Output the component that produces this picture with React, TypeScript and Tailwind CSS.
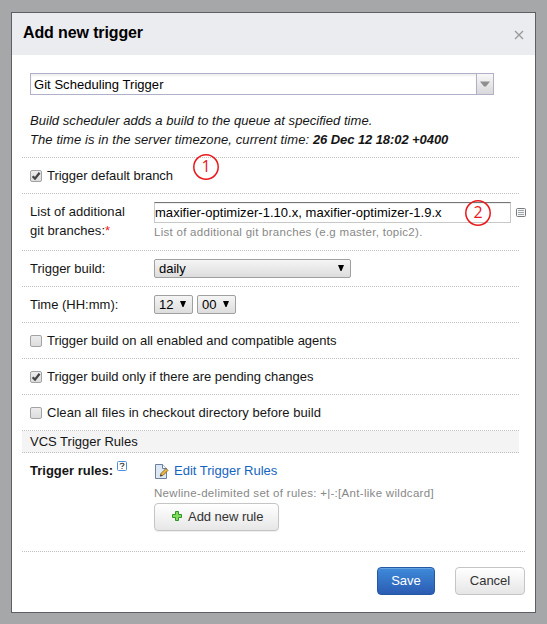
import type { ReactNode } from "react";

function Check({ checked = false }: { checked?: boolean }) {
  return (
    <span className="mr-[5px] mt-px flex h-3 w-3 shrink-0 items-center justify-center rounded-[2px] border border-[#a3a3a3] bg-linear-to-b from-[#ededed] to-[#dcdcdc]">
      {checked && (
        <svg width="10" height="10" viewBox="0 0 10 10" className="shrink-0">
          <path d="M1.6 5.2 L4 7.6 L8.6 1.8" fill="none" stroke="#444" strokeWidth="2.3" />
        </svg>
      )}
    </span>
  );
}

function Row({ children, className = "h-9" }: { children: ReactNode; className?: string }) {
  return <div className={`flex w-[497px] border-b border-dotted border-[#c0c0c0] pl-2 ${className}`}>{children}</div>;
}

function CheckRow({ label, checked, tracking }: { label: string; checked?: boolean; tracking: string }) {
  return (
    <Row className="h-9 items-center">
      <Check checked={checked} />
      <span className={tracking}>{label}</span>
    </Row>
  );
}

function Select({ value, className }: { value: string; className: string }) {
  return (
    <div className={`flex h-[19px] items-center justify-between rounded-[2px] border border-[#a0a0a0] bg-linear-to-b from-[#f5f5f5] to-[#dddddd] pl-1 text-black ${className}`}>
      <span>{value}</span>
      <svg width="6" height="6" viewBox="0 0 6 6" className="mb-[2px] mr-[6px]">
        <path d="M0 0H6L3.5 6H2.5Z" fill="#000" />
      </svg>
    </div>
  );
}

function Marker({ value, className }: { value: string; className: string }) {
  return (
    <div className={`absolute h-[26px] w-[26px] ${className}`}>
      <svg width="26" height="26" viewBox="0 0 26 26" className="absolute inset-0">
        <circle cx="13" cy="13" r="12.2" fill="none" stroke="#e8191c" strokeWidth="1.5" />
      </svg>
      <span className="block text-center font-['Open_Sans',sans-serif] text-[16px] leading-[25px] text-[#e8191c]">{value}</span>
    </div>
  );
}

export default function App() {
  return (
    <div className="relative h-[624px] w-[547px] overflow-hidden bg-[#a6a7a9] pl-[11px] pt-3 font-['Liberation_Sans',Arial,sans-serif] text-[13px] leading-[19px] text-[#151515]">
      <div className="h-[601px] w-[525px] border border-[#5e5f64] bg-white">
        <header className="flex h-[42px] justify-between bg-[#ebecf0] pl-[11px] pr-[11px]">
          <h1 className="pt-[10px] text-[16px] font-bold leading-[20px] tracking-[-0.12px] text-black">Add new trigger</h1>
          <svg width="10" height="10" viewBox="0 0 10 10" className="mt-[17px]">
            <path d="M1 1L9 9M9 1L1 9" stroke="#999" strokeWidth="1.3" />
          </svg>
        </header>
        <div className="pl-[10px] pr-[10px] pt-[18px]">
          <div className="ml-2 flex h-[22px] w-[464px] border border-[#b0b1c8] text-black">
            <span className="flex-1 pl-[3px] leading-[22px] tracking-[0.04px] shadow-[inset_0_2px_2px_#f0f0f0]">Git Scheduling Trigger</span>
            <span className="flex w-[17px] items-center justify-center border-l border-[#b0b1c8] bg-linear-to-b from-[#f8f8f8] to-[#d8d8da]">
              <svg width="10" height="6" viewBox="0 0 10 6">
                <path d="M0 .5H10L6 5.5H4Z" fill="#8e8f91" />
              </svg>
            </span>
          </div>
          <Row className="h-[63px] flex-col pt-[16px] italic tracking-[0.045px]">
            <p>Build scheduler adds a build to the queue at specified time.</p>
            <p className="tracking-[0.095px]">
              The time is in the server timezone, current time: <b className="tracking-[-0.08px]">26 Dec 12 18:02 +0400</b>
            </p>
          </Row>
          <CheckRow label="Trigger default branch" checked tracking="tracking-[-0.03px]" />
          <Row className="h-[57px]">
            <div className="w-[124px] shrink-0 pt-2 tracking-[0.05px]">
              List of additional
              <br />
              git branches:<span className="text-[#f02020]">*</span>
            </div>
            <div className="w-[357px] shrink-0 pt-2">
              <div className="h-[21px] border border-[#c8c8c8] border-t-[#777] tracking-[0.04px] text-black shadow-[inset_0_1px_0_#eeeeee]">maxifier-optimizer-1.10.x, maxifier-optimizer-1.9.x</div>
              <div className="text-[11.5px] leading-[18px] tracking-[0.28px] text-[#888]">List of additional git branches (e.g master, topic2).</div>
            </div>
            <svg width="10" height="9" viewBox="0 0 10 9" className="ml-[5px] mt-[14px] shrink-0">
              <rect x=".5" y=".5" width="9" height="8" rx="1" fill="#f6f6f6" stroke="#777b80" />
              <path d="M2 2.5H8M2 4.5H8M2 6.5H8" stroke="#a2a6aa" />
            </svg>
          </Row>
          <Row className="h-9 items-center">
            <span className="w-[124px]">Trigger build:</span>
            <Select value="daily" className="w-[197px]" />
          </Row>
          <Row className="h-9 items-center">
            <span className="w-[124px]">Time (HH:mm):</span>
            <Select value="12" className="w-[39px]" />
            <Select value="00" className="ml-1 w-[39px]" />
          </Row>
          <CheckRow label="Trigger build on all enabled and compatible agents" tracking="tracking-[-0.025px]" />
          <CheckRow label="Trigger build only if there are pending changes" checked tracking="tracking-[-0.025px]" />
          <CheckRow label="Clean all files in checkout directory before build" tracking="tracking-[0.045px]" />
          <Row className="h-[22px] items-center bg-[#f4f4f4]">VCS Trigger Rules</Row>
          <section className="flex h-[99px] w-[503px] border-b border-dotted border-[#c0c0c0] pl-2 pt-2">
            <div className="flex w-[124px] font-bold">
              Trigger rules:
              <svg width="10" height="10" viewBox="0 0 10 10" className="ml-1 shrink-0">
                <rect x=".5" y=".5" width="9" height="9" rx="1" fill="#fff" stroke="#4f8fe0" />
                <path d="M3 3.6C3 1.9 7 1.9 7 3.6C7 4.8 5 4.6 5 6M5 7V8" fill="none" stroke="#555" strokeWidth="1.2" />
              </svg>
            </div>
            <div>
              <div className="flex">
                <svg width="15" height="16" viewBox="0 0 15 16" className="mt-[2px]">
                  <path d="M1.5 1.5H8.5L12.5 5.5V15.5H1.5Z" fill="#dce9f5" stroke="#6b7fa0" />
                  <path d="M8.5 1.5V5.5H12.5" fill="#fff" stroke="#6b7fa0" />
                  <path d="M6.2 13.2L7 10.4L12 5.4L14 7.4L9 12.4Z" fill="#efb534" stroke="#6d5b3d" strokeWidth=".8" />
                  <path d="M6.2 13.2L6.8 11.2L8.2 12.6Z" fill="#333" />
                </svg>
                <a className="ml-[5px] text-[#1564c2]">Edit Trigger Rules</a>
              </div>
              <div className="pt-[4px] text-[11.5px] leading-[18px] tracking-[0.3px] text-[#888]">Newline-delimited set of rules: +|-:[Ant-like wildcard]</div>
              <button className="mt-px flex h-[28px] w-[125px] items-center rounded-[4px] border border-[#c5c5c5] bg-linear-to-b from-white to-[#e7e7e7] pb-[2px] pl-[17px] tracking-[-0.04px] text-[#333] shadow-[0_1px_1px_#eeeeee]">
                <svg width="10" height="10" viewBox="0 0 10 10" className="mr-[6px]">
                  <path d="M3.5 .5H6.5V3.5H9.5V6.5H6.5V9.5H3.5V6.5H.5V3.5H3.5Z" fill="#80dd59" stroke="#2f9427" />
                </svg>
                Add new rule
              </button>
            </div>
          </section>
          <footer className="flex justify-end pt-[15px] text-[13px]">
            <button className="h-[28px] w-[58px] rounded-[4px] border border-[#2458a6] bg-linear-to-b from-[#3f8ad9] to-[#2b5cb2] pb-[2px] text-white shadow-[inset_0_1px_0_#65a3e2]">Save</button>
            <button className="ml-5 h-[28px] w-[70px] rounded-[4px] border border-[#c5c5c5] bg-linear-to-b from-white to-[#e6e6e6] pb-[2px] text-[#333]">Cancel</button>
          </footer>
        </div>
      </div>
      <Marker value="1" className="left-[193px] top-[154px]" />
      <Marker value="2" className="left-[465px] top-[200px]" />
    </div>
  );
}
